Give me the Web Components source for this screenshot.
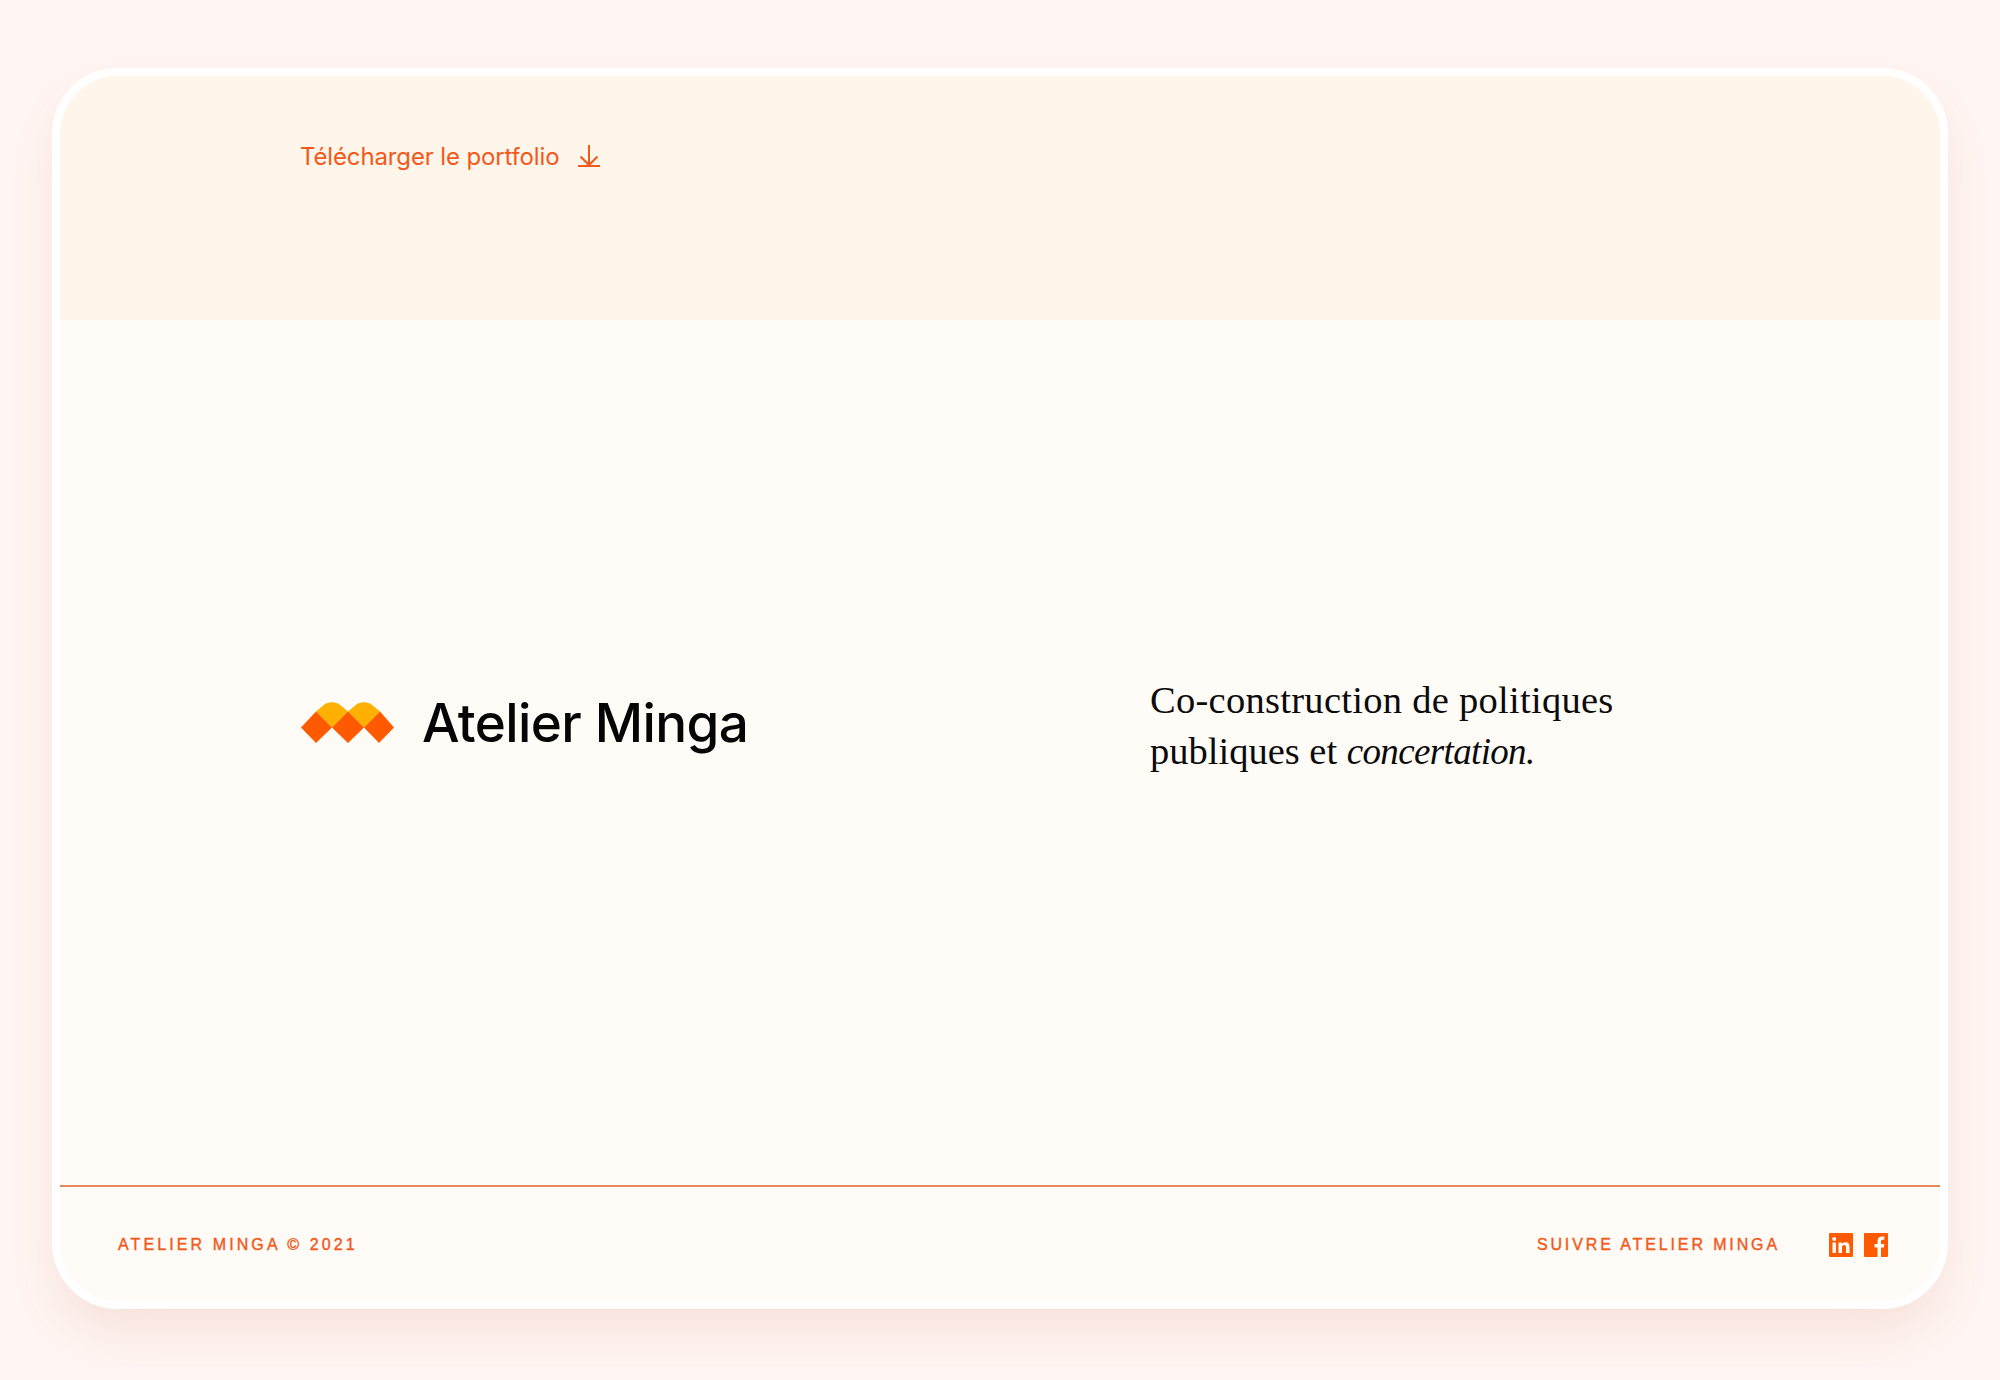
<!DOCTYPE html>
<html lang="fr"><head><meta charset="utf-8"><title>Atelier Minga</title>
<style>
html,body{margin:0;padding:0;background:#fff5f2}
body{width:2000px;height:1380px;overflow:hidden}
</style></head>
<body>
<site-frame>
  <top-band slot="top" label="Télécharger le portfolio"></top-band>
  <hero-section slot="main"></hero-section>
  <site-footer slot="foot"></site-footer>
</site-frame>
<script>
function def(name,html){customElements.define(name,class extends HTMLElement{constructor(){super();this.attachShadow({mode:'open'}).innerHTML=html(this)}})}
def('site-frame',()=>`<style>
:host{display:block;padding:68px 52px 71px;box-sizing:border-box;height:1380px}
.card{height:100%;box-sizing:border-box;border:8px solid #fff;border-radius:66px;background:#fffcf8;overflow:hidden;display:flex;flex-direction:column;box-shadow:0 26px 50px -8px rgba(190,100,70,.15);background-clip:padding-box}
</style><div class="card"><slot name="top"></slot><slot name="main"></slot><slot name="foot"></slot></div>`);
def('top-band',el=>`<style>
:host{display:block;height:244px;box-sizing:border-box;background:#fef6ea;padding:61px 0 0 240px;flex:none}
a{display:inline-flex;align-items:center;gap:18px;color:#f2591a;font:400 24px/40px Inter,"Liberation Sans",sans-serif;text-decoration:none;letter-spacing:-.14px}
svg{display:block;margin-top:-3px}
</style><a href="#">${el.getAttribute('label')}<svg width="24" height="24" viewBox="0 0 24 24" fill="none" stroke="#f2591a" stroke-width="2"><path d="M12 1v20M3.500 12.500 12 21l8.500-8.500M1 22h22"/></svg></a>`);
def('brand-logo',()=>`<style>
:host{display:flex;align-items:center;gap:28px;padding-bottom:2px}
svg{display:block;flex:none;margin-top:1px}
span{font:500 53px/64px Inter,"Liberation Sans",sans-serif;color:#050505;letter-spacing:-.6px}
</style><svg width="94" height="42" viewBox="0 0 94 42" aria-hidden="true">
<path fill="#ffb000" d="M16 9.500 23.500 3.200C28.500-.6 35.500-.6 40.500 3.200L48 9.500 55.500 3.200C60.500-.6 67.500-.6 72.500 3.200L80 9.500 64 25.500 48 9.500 32 25.500Z"/>
<path fill="#ff5a00" d="M16 9.500 32 25.500 48 9.500 64 25.500 80 9.500 94 25.500 79 41 64 25.500 48 41 32 25.500 16 41 1 25.500Z"/></svg><span>Atelier Minga</span>`);
def('hero-section',()=>`<style>
:host{display:grid;grid-template-columns:850px 1fr;align-items:center;flex:1;height:865px;box-sizing:border-box;padding:0 0 58px 240px}
p{margin:0;padding-top:5px;font:400 38.500px/51px "Liberation Serif",serif;color:#0b0b0b;letter-spacing:.28px}
.l2{letter-spacing:0}
em{font-size:37px;letter-spacing:-.65px}
</style><brand-logo></brand-logo><p>Co-construction de politiques<br><span class="l2">publiques et <em>concertation.</em></span></p>`);
def('site-footer',()=>`<style>
:host{display:flex;align-items:center;justify-content:space-between;flex:none;height:116px;box-sizing:border-box;border-top:2px solid #e58a5f;padding:2px 52px 0 58px;color:#f2591a;font:400 16px/20px "Liberation Sans",sans-serif;letter-spacing:3.1px;-webkit-text-stroke:.4px #f2591a}
.r{display:flex;align-items:center}
.t{margin-right:49px;letter-spacing:2.88px}
svg{display:block}
svg+svg{margin-left:11px}
</style><span>ATELIER MINGA © 2021</span><div class="r"><span class="t">SUIVRE ATELIER MINGA</span>
<svg width="24" height="24" viewBox="0 0 24 24"><rect width="24" height="24" rx="1" fill="#ff5a00"/><path fill="#fffcf8" d="M3.500 9.500h3.500V20H3.500zM5.250 4a2 2 0 1 1 0 4 2 2 0 0 1 0-4zM9.500 9.500h3.300V11c.6-1 1.800-1.800 3.500-1.800 3.200 0 4.200 2 4.200 4.900V20H17v-5.300c0-1.500-.4-2.600-1.800-2.600-1.500 0-2.200 1.100-2.200 2.600V20H9.500z"/></svg>
<svg width="24" height="24" viewBox="0 0 24 24"><rect width="24" height="24" rx="1" fill="#ff5a00"/><path fill="#fffcf8" d="M13.500 24v-9.500h-3V11h3V8.300C13.500 5.200 15.300 3.500 18 3.500c1 0 1.800.1 2.300.2v3h-1.600c-1.400 0-1.700.7-1.700 1.700V11h3.300l-.5 3.500H17V24z"/></svg></div>`);
</script>
</body></html>
